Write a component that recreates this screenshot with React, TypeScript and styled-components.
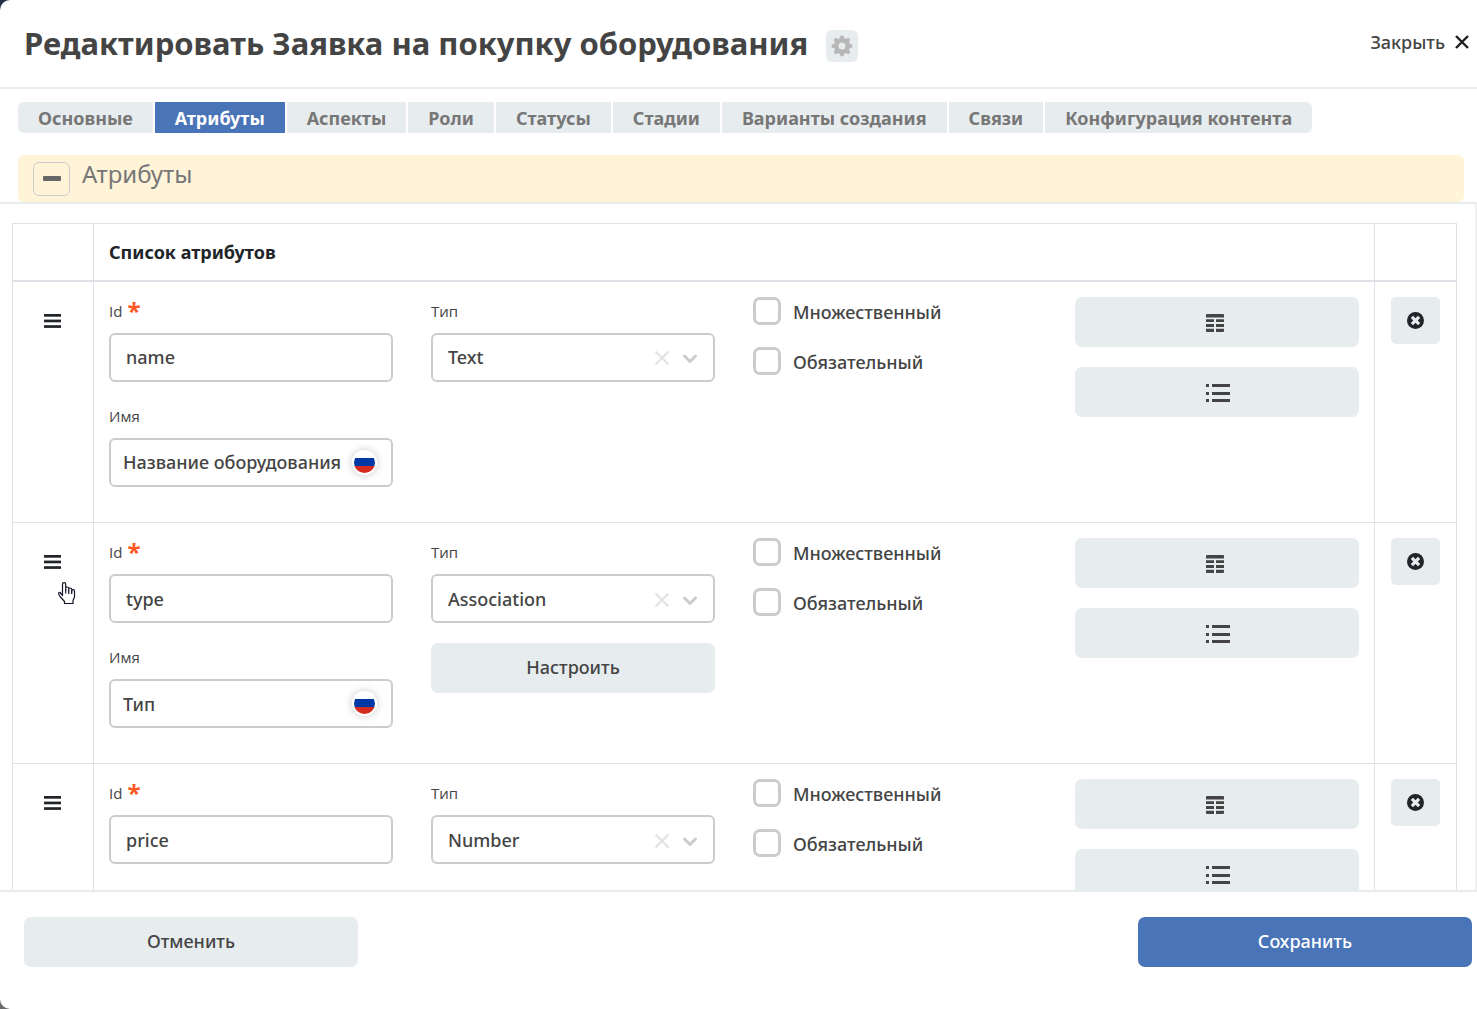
import React, { useState } from "react";
import styled, { createGlobalStyle } from "styled-components";

const GlobalStyle = createGlobalStyle`
  *, *::before, *::after { box-sizing: border-box; }
  body {
    margin: 0;
    background: linear-gradient(#22304a, #6b6b6b);
    font-family: "Noto Sans", "Open Sans", sans-serif;
    font-size: 18px;
    font-weight: 500;
    line-height: 24px;
    color: #444;
  }
  button, input, select { font: inherit; color: inherit; }
  button { border: 0; padding: 0; cursor: pointer; }
`;

const Dialog = styled.div`
  display: flex;
  flex-direction: column;
  height: 100vh;
  background: #fff;
  border-radius: 10px 0 0 10px;
  overflow: hidden;
`;

const Header = styled.header`
  display: flex;
  align-items: center;
  justify-content: space-between;
  height: 89px;
  flex: none;
  padding: 0 8px 0 24px;
  border-bottom: 2px solid #e7ecef;
`;

const TitleGroup = styled.div`
  display: flex;
  align-items: center;
  gap: 18px;
  padding-top: 5px;
`;

const Title = styled.h1`
  margin: 0;
  padding-bottom: 6px;
  font-size: 31px;
  line-height: 40px;
  font-weight: 700;
`;

const GearButton = styled.button`
  display: grid;
  place-items: center;
  width: 32px;
  height: 32px;
  border-radius: 6px;
  background: #e7ecee;
  color: #b7b7b7;
`;

const CloseButton = styled.button`
  display: flex;
  align-items: center;
  gap: 10px;
  padding-bottom: 4px;
  background: none;
`;

const Tabs = styled.nav`
  display: flex;
  gap: 2px;
  flex: none;
  padding: 13px 18px 22px;
`;

const Tab = styled.button<{ $active: boolean }>`
  height: 31px;
  padding: 0 20px;
  font-weight: 700;
  white-space: nowrap;
  background: ${(p) => (p.$active ? "#4a74b8" : "#e7ecee")};
  color: ${(p) => (p.$active ? "#fff" : "#777")};
  &:first-child { border-radius: 6px 0 0 6px; }
  &:last-child { border-radius: 0 6px 6px 0; }
`;

const Section = styled.div`
  display: flex;
  gap: 12px;
  flex: none;
  height: 47px;
  margin: 0 13px 0 18px;
  padding: 7px 15px 0;
  border-radius: 6px;
  background: #fff4d8;
`;

const Collapse = styled.button`
  display: grid;
  place-items: center;
  width: 37px;
  height: 34px;
  border: 1px solid #ccc;
  border-radius: 6px;
  background: none;
  color: #666;
`;

const SectionTitle = styled.h2`
  margin: 0;
  font-size: 24px;
  line-height: 24px;
  font-weight: 400;
  color: #777;
`;

const Body = styled.main`
  flex: 1;
  min-height: 0;
  overflow-y: auto;
  scrollbar-width: none;
  padding: 19px 18px 19px 12px;
  border-top: 2px solid #e7ecef;
  border-bottom: 2px solid #e7ecef;
  border-right: 2px solid #f0f0f0;
`;

const Table = styled.table`
  width: 100%;
  border-collapse: collapse;
  table-layout: fixed;
`;

const SideCol = styled.col<{ $width: number }>`
  width: ${(p) => p.$width}px;
`;

const HeadCell = styled.th`
  height: 57px;
  padding: 0 15px;
  border: 1px solid #dee2e6;
  border-bottom-width: 2px;
  text-align: left;
  font-weight: 700;
  color: #212529;
`;

const Cell = styled.td`
  height: 241px;
  padding: 15px;
  border: 1px solid #dee2e6;
  vertical-align: top;
  tr:first-child > & { height: 242px; }
`;

const ActionCell = styled(Cell)`
  padding: 15px 16px;
`;

const Handle = styled.button`
  display: grid;
  place-items: center;
  width: 100%;
  height: 48px;
  background: none;
  color: #212529;
`;

const Fields = styled.div`
  display: grid;
  grid-template-columns: repeat(4, minmax(0, 1fr));
  gap: 38px;
`;

const Column = styled.div`
  display: flex;
  flex-direction: column;
  gap: 20px;
`;

const Field = styled.div`
  display: flex;
  flex-direction: column;
`;

const Label = styled.label`
  display: flex;
  gap: 5px;
  height: 36px;
  font-family: "Open Sans", "Noto Sans", sans-serif;
  font-size: 15px;
  line-height: 28px;
`;

const Required = styled.span`
  font-size: 24px;
  line-height: 28px;
  font-weight: 700;
  color: #ff5722;
`;

const Box = styled.div`
  display: flex;
  align-items: center;
  height: 49px;
  border: 2px solid #ccc;
  border-radius: 6px;
  background: #fff;
`;

const TextInput = styled.input`
  flex: 1;
  min-width: 0;
  height: 100%;
  padding: 0 0 0 15px;
  border: 0;
  background: none;
  outline: none;
`;

const NameInput = styled(TextInput)`
  padding-left: 12px;
`;

const Select = styled.select`
  flex: 1;
  min-width: 0;
  height: 100%;
  padding: 0 0 0 15px;
  border: 0;
  appearance: none;
  background: none;
  outline: none;
`;

const ClearButton = styled.button`
  display: grid;
  width: 16px;
  margin-right: 12px;
  padding-top: 2px;
  background: none;
  color: #e4e4e4;
`;

const Arrow = styled.span`
  display: grid;
  width: 16px;
  margin-right: 15px;
  padding-top: 2px;
  color: #ccc;
`;

const Flag = styled.span`
  width: 25px;
  height: 25px;
  margin-right: 14px;
  border: 2px solid #fff;
  border-radius: 50%;
  background: linear-gradient(#fff 0 29%, #0039a6 29% 67%, #d52b1e 67%);
  box-shadow: 0 0 8px rgba(0, 0, 0, 0.22);
`;

const Checks = styled.div`
  display: flex;
  flex-direction: column;
  gap: 22px;
`;

const CheckLabel = styled.label`
  display: flex;
  gap: 12px;
  height: 28px;
  line-height: 30px;
`;

const Checkbox = styled.input`
  appearance: none;
  flex: none;
  width: 28px;
  height: 28px;
  margin: 0;
  border: 3px solid #ccc;
  border-radius: 7px;
  background: #fff;
  &:checked { background: #4a74b8; }
`;

const WideButton = styled.button<{ $primary?: boolean }>`
  display: flex;
  align-items: center;
  justify-content: center;
  width: 100%;
  height: 50px;
  padding-bottom: 2px;
  border-radius: 7px;
  background: ${(p) => (p.$primary ? "#4a74b8" : "#e7ecee")};
  color: ${(p) => (p.$primary ? "#fff" : "#444")};
`;

const IconSlot = styled.span`
  display: flex;
  width: 22px;
  padding-top: 4px;
  svg { flex: none; }
`;

const DeleteButton = styled.button`
  display: grid;
  place-items: center;
  width: 49px;
  height: 47px;
  border-radius: 5px;
  background: #e7ecee;
  color: #212529;
`;

const Footer = styled.footer`
  display: grid;
  grid-template-columns: 334px 334px;
  justify-content: space-between;
  flex: none;
  padding: 25px 5px 42px 24px;
`;

const Pointer = styled.svg`
  position: fixed;
  left: 57px;
  top: 581px;
  pointer-events: none;
`;

const GearIcon = () => (
  <svg width="22" height="22" viewBox="-11 -11 22 22" fill="currentColor" aria-hidden="true">
    {[0, 45, 90, 135].map((angle) => (
      <path key={angle} transform={`rotate(${angle})`} d="M-2.6-6.5L-1.5-10.3h3L2.6-6.5v13L1.5 10.3h-3L-2.6 6.5zM-2.6-3v6h5.2v-6z" fillRule="evenodd" />
    ))}
    <circle r="5.8" fill="none" stroke="currentColor" strokeWidth="4.4" />
    <circle r="3.5" fill="#e7ecee" />
  </svg>
);

const CrossIcon = () => (
  <svg width="14" height="14" viewBox="0 0 14 14" fill="none" stroke="#1d1d1d" strokeWidth="2.4" aria-hidden="true">
    <path d="M1 1l12 12M13 1l-12 12" />
  </svg>
);

const BarsIcon = () => (
  <svg width="18" height="16" viewBox="0 0 18 16" fill="currentColor" aria-hidden="true">
    <rect y="1" width="17" height="2.7" /><rect y="6.6" width="17" height="2.7" /><rect y="12.2" width="17" height="2.7" />
  </svg>
);

const TableIcon = () => (
  <svg width="18" height="18" viewBox="0 0 18 18" fill="currentColor" aria-hidden="true">
    <path d="M1 0h16a1 1 0 0 1 1 1v2.5H0V1a1 1 0 0 1 1-1zM0 5.2h8v2.8H0zM10 5.2h8v2.8h-8zM0 10h8v3H0zM10 10h8v3h-8zM0 14.7h8V18H1a1 1 0 0 1-1-1zM10 14.7h8V17a1 1 0 0 1-1 1h-7z" />
  </svg>
);

const ListIcon = () => (
  <svg width="24" height="18" viewBox="0 0 24 18" fill="currentColor" aria-hidden="true">
    <path d="M0 0h3v3H0zM6 0h18v3H6zM0 8h3v3H0zM6 8h18v3H6zM0 15h3v3H0zM6 15h18v3H6z" />
  </svg>
);

const DeleteIcon = () => (
  <svg width="17" height="17" viewBox="0 0 18 18" aria-hidden="true">
    <circle cx="9" cy="9" r="9" fill="currentColor" />
    <path d="M5.2 5.2l7.6 7.6M12.8 5.2l-7.6 7.6" stroke="#e7ecee" strokeWidth="3.4" />
  </svg>
);

const types = ["Text", "Association", "Number"];
const tabs = [
  "Основные", "Атрибуты", "Аспекты", "Роли", "Статусы", "Стадии",
  "Варианты создания", "Связи", "Конфигурация контента",
];

type Attribute = { id: string; type: string; name?: string; configurable?: boolean };

const attributes: Attribute[] = [
  { id: "name", type: "Text", name: "Название оборудования" },
  { id: "type", type: "Association", name: "Тип", configurable: true },
  { id: "price", type: "Number" },
];

function AttributeRow({ attribute }: { attribute: Attribute }) {
  const key = attribute.id;
  return (
    <tr>
      <Cell><Handle aria-label="Переместить"><BarsIcon /></Handle></Cell>
      <Cell>
        <Fields>
          <Column>
            <Field>
              <Label htmlFor={`${key}-id`}>Id <Required>*</Required></Label>
              <Box><TextInput id={`${key}-id`} defaultValue={attribute.id} /></Box>
            </Field>
            {attribute.name && (
              <Field>
                <Label htmlFor={`${key}-name`}>Имя</Label>
                <Box>
                  <NameInput id={`${key}-name`} defaultValue={attribute.name} />
                  <Flag />
                </Box>
              </Field>
            )}
          </Column>
          <Column>
            <Field>
              <Label htmlFor={`${key}-type`}>Тип</Label>
              <Box>
                <Select id={`${key}-type`} defaultValue={attribute.type}>
                  {types.map((t) => <option key={t}>{t}</option>)}
                </Select>
                <ClearButton aria-label="Очистить">
                  <svg width="16" height="16" viewBox="0 0 16 16" fill="none" stroke="currentColor" strokeWidth="2.4">
                    <path d="M1.5 1.5l13 13M14.5 1.5l-13 13" />
                  </svg>
                </ClearButton>
                <Arrow>
                  <svg width="16" height="16" viewBox="0 0 16 16" fill="none" stroke="currentColor" strokeWidth="3" strokeLinecap="round" strokeLinejoin="round">
                    <path d="M2.5 6l5.5 5.5 5.5-5.5" />
                  </svg>
                </Arrow>
              </Box>
            </Field>
            {attribute.configurable && <WideButton>Настроить</WideButton>}
          </Column>
          <Checks>
            <CheckLabel><Checkbox type="checkbox" />Множественный</CheckLabel>
            <CheckLabel><Checkbox type="checkbox" />Обязательный</CheckLabel>
          </Checks>
          <Column>
            <WideButton aria-label="Таблица"><IconSlot><TableIcon /></IconSlot></WideButton>
            <WideButton aria-label="Список"><IconSlot><ListIcon /></IconSlot></WideButton>
          </Column>
        </Fields>
      </Cell>
      <ActionCell><DeleteButton aria-label="Удалить"><DeleteIcon /></DeleteButton></ActionCell>
    </tr>
  );
}

export default function App() {
  const [active, setActive] = useState("Атрибуты");
  return (
    <>
      <GlobalStyle />
      <Dialog role="dialog" aria-labelledby="dialog-title">
        <Header>
          <TitleGroup>
            <Title id="dialog-title">Редактировать Заявка на покупку оборудования</Title>
            <GearButton aria-label="Настройки"><GearIcon /></GearButton>
          </TitleGroup>
          <CloseButton>Закрыть <CrossIcon /></CloseButton>
        </Header>
        <Tabs>
          {tabs.map((t) => (
            <Tab key={t} $active={t === active} onClick={() => setActive(t)}>{t}</Tab>
          ))}
        </Tabs>
        <Section>
          <Collapse aria-label="Свернуть">
            <svg width="18" height="6" viewBox="0 0 18 6"><rect width="18" height="5" rx="1" fill="currentColor" /></svg>
          </Collapse>
          <SectionTitle>Атрибуты</SectionTitle>
        </Section>
        <Body>
          <Table>
            <colgroup><SideCol $width={81} /><col /><SideCol $width={82} /></colgroup>
            <thead>
              <tr><HeadCell /><HeadCell>Список атрибутов</HeadCell><HeadCell /></tr>
            </thead>
            <tbody>
              {attributes.map((a) => <AttributeRow key={a.id} attribute={a} />)}
            </tbody>
          </Table>
        </Body>
        <Footer>
          <WideButton>Отменить</WideButton>
          <WideButton $primary>Сохранить</WideButton>
        </Footer>
      </Dialog>
      <Pointer width="20" height="24" viewBox="0 0 20 24" fill="#fff" stroke="#15152a" strokeWidth="1.2" strokeLinejoin="round" aria-hidden="true">
        <path d="M5.5 14.5V3.2a1.6 1.6 0 0 1 3.2 0V9.5V7.5a1.5 1.5 0 0 1 3 0V10V8.5a1.5 1.5 0 0 1 3 0V11V10a1.3 1.3 0 0 1 2.8 0V16l-1.5 3.5V22.5H7.5V20.5L3 15.5C1 13 1.5 11 3 11.5z" />
        <path d="M8.7 8.5v4M11.7 9v4M14.7 10v3" />
      </Pointer>
    </>
  );
}
